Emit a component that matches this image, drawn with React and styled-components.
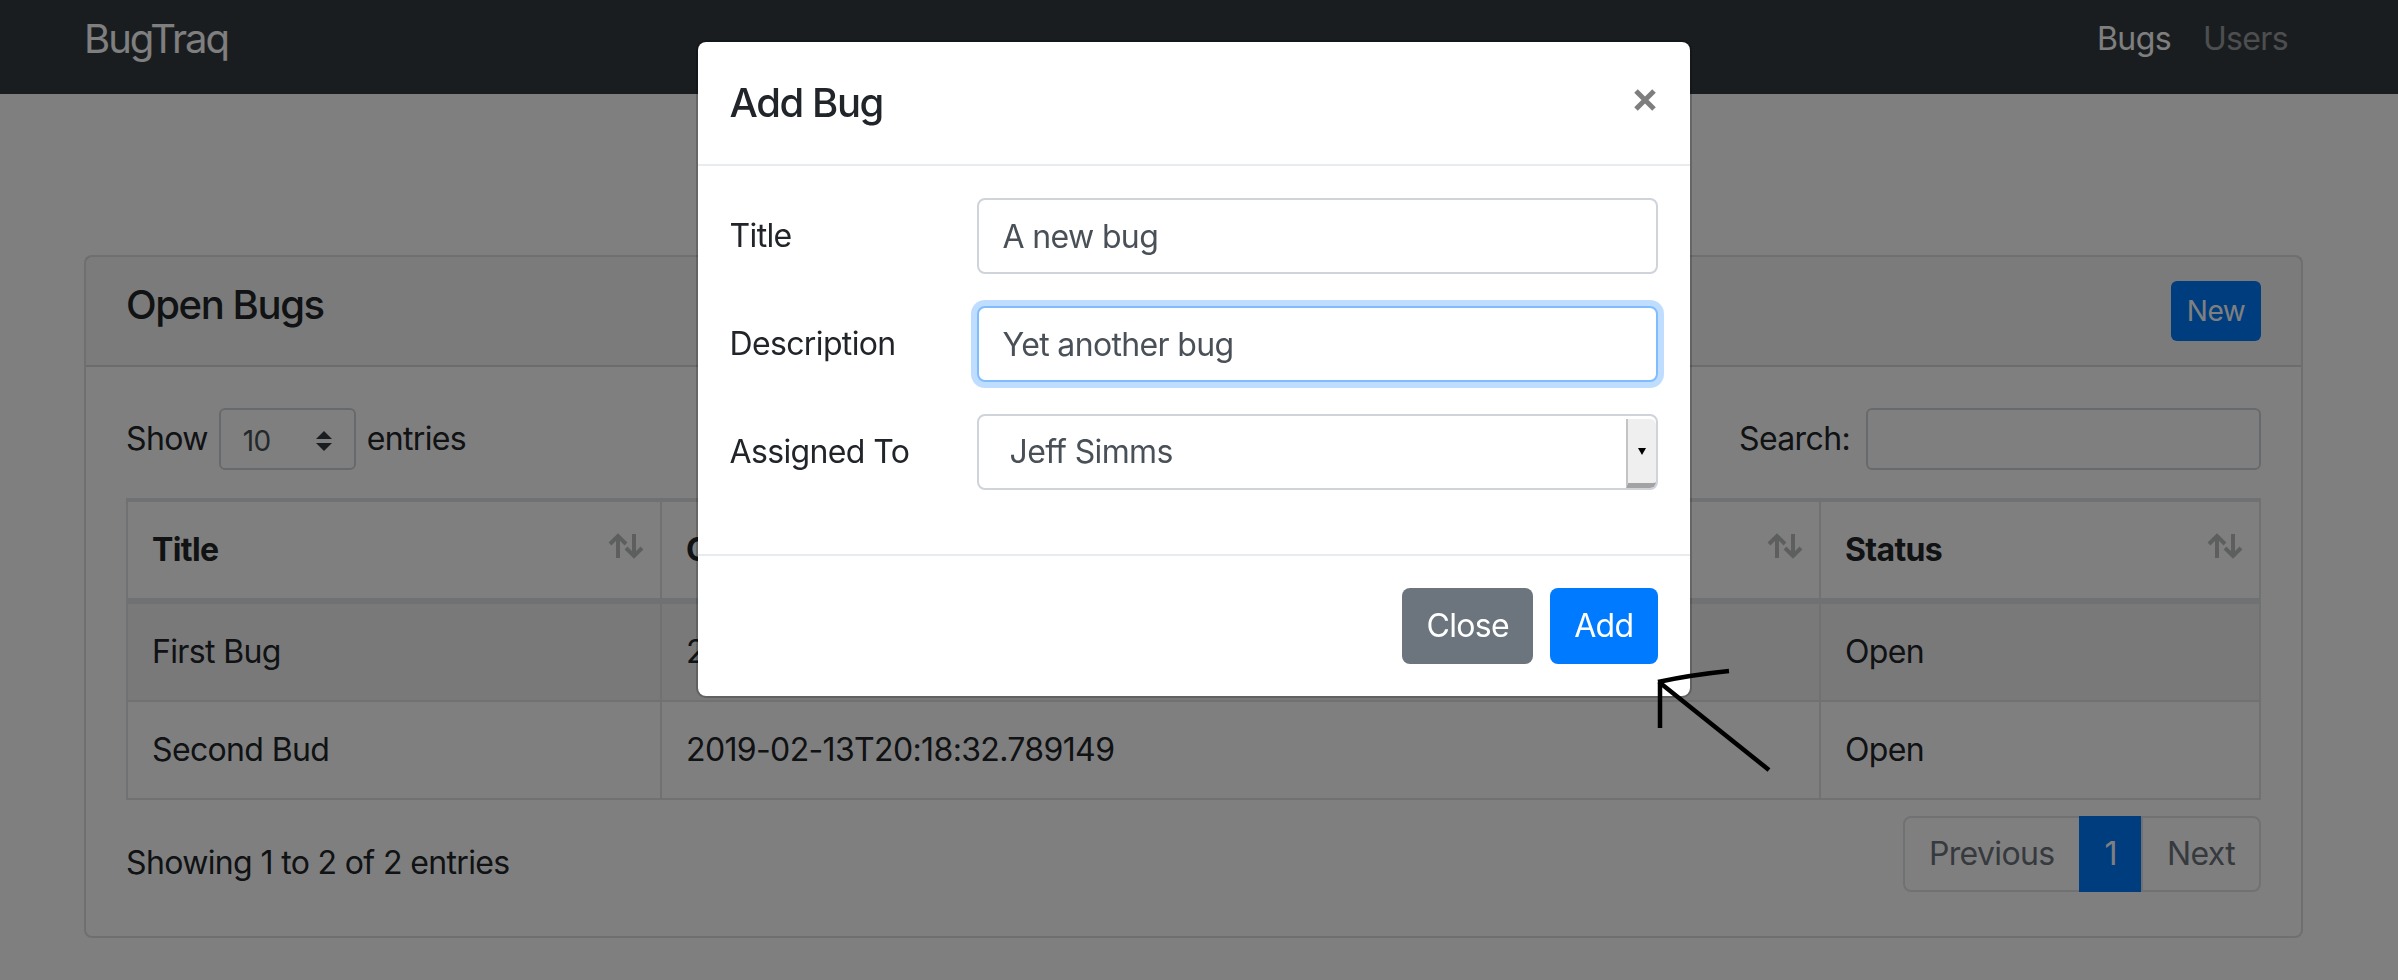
import React from "react";
import styled, { createGlobalStyle } from "styled-components";

const GlobalStyle = createGlobalStyle`
  * { box-sizing: border-box; }
  html, body { margin: 0; padding: 0; background: #fff; }
  body {
    font-family: Inter, "Liberation Sans", sans-serif;
    font-size: 32px;
    line-height: 1.5;
    letter-spacing: -0.02em;
    color: #212529;
    height: 980px;
    overflow: hidden;
  }
`;

const Navbar = styled.nav`
  height: 94px;
  background: #343a40;
  display: flex;
  justify-content: space-between;
  align-items: flex-start;
  padding: 0 94px 0 84px;
`;

const Brand = styled.a`
  font-size: 40px;
  line-height: 60px;
  letter-spacing: -0.05em;
  padding-top: 9px;
  color: #fff;
  text-decoration: none;
`;

const NavLinks = styled.div`
  display: flex;
  padding-top: 15px;
`;

const NavLink = styled.a`
  padding: 0 16px;
  font-size: 32px;
  line-height: 48px;
  color: ${(p) => (p.$active ? "#fff" : "rgba(255,255,255,.5)")};
  text-decoration: none;
`;

const Main = styled.main`
  padding: 161px 95px 0 84px;
`;

const Card = styled.section`
  border: 2px solid rgba(0, 0, 0, 0.125);
  border-radius: 8px;
  background: #fff;
`;

const CardHeader = styled.header`
  display: flex;
  justify-content: space-between;
  align-items: flex-start;
  padding: 24px 40px;
  background: rgba(0, 0, 0, 0.03);
  border-bottom: 2px solid rgba(0, 0, 0, 0.125);
`;

const CardTitle = styled.h5`
  margin: 0;
  font-size: 40px;
  font-weight: 500;
  line-height: 48px;
  letter-spacing: -0.035em;
`;

const SmallButton = styled.button`
  height: 60px;
  padding: 0 16px;
  font: inherit;
  font-size: 28px;
  letter-spacing: -0.02em;
  color: #fff;
  background: #007bff;
  border: 0;
  border-radius: 6px;
`;

const CardBody = styled.div`
  padding: 41px 40px 40px;
`;

const TopRow = styled.div`
  display: flex;
  justify-content: space-between;
  align-items: center;
  height: 62px;
`;

const InlineLabel = styled.label`
  display: flex;
  align-items: center;
  gap: ${(p) => p.$gap || 11}px;
`;

const LengthSelect = styled.div`
  width: 137px;
  height: 62px;
  display: flex;
  align-items: center;
  justify-content: space-between;
  padding: 4px 22px 0 22px;
  font-size: 28px;
  color: #495057;
  border: 2px solid #ced4da;
  border-radius: 6px;
`;

const SearchInput = styled.input`
  width: 395px;
  height: 62px;
  border: 2px solid #ced4da;
  border-radius: 6px;
  font: inherit;
  font-size: 28px;
  padding: 0 16px;
  outline: none;
`;

const Table = styled.table`
  width: 100%;
  table-layout: fixed;
  border-collapse: separate;
  border-spacing: 0;
  border: 2px solid #dee2e6;
  margin: 28px 0 12px;
`;

const Th = styled.th`
  width: ${(p) => p.$w}px;
  padding: 24px 16px 24px 24px;
  text-align: left;
  font-weight: 700;
  border-top: 2px solid #dee2e6;
  border-bottom: 4px solid #dee2e6;
  border-left: 2px solid #dee2e6;
  &:first-child { border-left: 0; }
`;

const HeadCell = styled.div`
  display: flex;
  justify-content: space-between;
  align-items: center;
`;

const SortIcon = styled.svg`
  width: 36px;
  height: 26px;
  margin-bottom: 8px;
  opacity: 0.3;
  flex-shrink: 0;
`;

const Tr = styled.tr`
  background: ${(p) => (p.$striped ? "rgba(0,0,0,.05)" : "transparent")};
`;

const Td = styled.td`
  padding: 24px;
  border-top: 2px solid #dee2e6;
  border-left: 2px solid #dee2e6;
  white-space: nowrap;
  overflow: hidden;
  &:first-child { border-left: 0; }
`;

const BottomRow = styled.div`
  display: flex;
  justify-content: space-between;
  align-items: flex-start;
`;

const Info = styled.div`
  padding-top: 27px;
  line-height: 48px;
`;

const Pagination = styled.ul`
  display: flex;
  list-style: none;
  margin: 4px 0;
  padding: 0;
`;

const PageLink = styled.li`
  padding: 16px 24px;
  line-height: 40px;
  border: 2px solid ${(p) => (p.$active ? "#007bff" : "#dee2e6")};
  background: ${(p) => (p.$active ? "#007bff" : "#fff")};
  color: ${(p) => (p.$active ? "#fff" : "#6c757d")};
  margin-left: -2px;
  &:first-child { margin-left: 0; border-radius: 8px 0 0 8px; }
  &:last-child { border-radius: 0 8px 8px 0; }
`;

const Backdrop = styled.div`
  position: fixed;
  inset: 0;
  background: rgba(0, 0, 0, 0.5);
  z-index: 1040;
`;

const ModalWrap = styled.div`
  position: fixed;
  inset: 0;
  z-index: 1050;
  display: flex;
  justify-content: center;
  align-items: flex-start;
  padding: 40px 11px 0 0;
`;

const ModalContent = styled.div`
  width: 996px;
  background: #fff;
  background-clip: padding-box;
  border: 2px solid rgba(0, 0, 0, 0.2);
  border-radius: 10px;
`;

const ModalHeader = styled.div`
  display: flex;
  justify-content: space-between;
  align-items: flex-start;
  padding: 31px 32px;
  border-bottom: 2px solid #e9ecef;
`;

const ModalTitle = styled.h5`
  margin: 0;
  font-size: 40px;
  font-weight: 500;
  line-height: 60px;
  letter-spacing: -0.035em;
`;

const CloseX = styled.button`
  margin-top: 15px;
  padding: 0;
  border: 0;
  background: transparent;
  opacity: 0.5;
  display: flex;
`;

const ModalBody = styled.div`
  padding: 32px;
`;

const FormRow = styled.div`
  display: grid;
  grid-template-columns: 247px 1fr;
  align-items: center;
  margin-bottom: 32px;
`;

const FieldInput = styled.input`
  width: 100%;
  height: 76px;
  padding: 0 24px;
  font: inherit;
  font-size: 32px;
  letter-spacing: -0.02em;
  color: #495057;
  border: 2px solid ${(p) => (p.$focused ? "#80bdff" : "#ced4da")};
  border-radius: 8px;
  outline: none;
  box-shadow: ${(p) => (p.$focused ? "0 0 0 6px rgba(0,123,255,.25)" : "none")};
`;

const SelectBox = styled.div`
  height: 76px;
  display: flex;
  border: 2px solid #ced4da;
  border-radius: 8px;
  color: #495057;
`;

const SelectValue = styled.span`
  flex: 1;
  display: flex;
  align-items: center;
  padding-left: 31px;
`;

const DropButton = styled.span`
  width: 30px;
  margin-top: 3px;
  background: #efefef;
  border-left: 2px solid #c4c4c4;
  border-bottom: 5px solid #a3a3a3;
  border-radius: 0 6px 6px 0;
  display: flex;
  align-items: center;
  justify-content: center;
`;

const ModalFooter = styled.div`
  display: flex;
  justify-content: flex-end;
  gap: 17px;
  padding: 32px;
  border-top: 2px solid #e9ecef;
`;

const Button = styled.button`
  height: 76px;
  padding: 0 24px;
  font: inherit;
  font-size: 32px;
  letter-spacing: -0.02em;
  color: #fff;
  background: ${(p) => (p.$variant === "secondary" ? "#6c757d" : "#007bff")};
  border: 0;
  border-radius: 8px;
`;

const Annotation = styled.svg`
  position: fixed;
  left: 1650px;
  top: 660px;
  z-index: 1060;
`;

const bugs = [
  { title: "First Bug", created: "2019-02-13T20:17:58.412335", status: "Open" },
  { title: "Second Bud", created: "2019-02-13T20:18:32.789149", status: "Open" },
];

function SortArrows() {
  return (
    <SortIcon viewBox="0 0 36 26" fill="none" stroke="#212529" strokeWidth="4">
      <path d="M10 25V3M2 11l8-8 8 8" />
      <path d="M26 1v22M18 15l8 8 8-8" />
    </SortIcon>
  );
}

export default function App() {
  const columns = [
    { name: "Title", w: 532 },
    { name: "Created", w: 1159 },
    { name: "Status", w: 440 },
  ];

  return (
    <>
      <GlobalStyle />
      <Navbar>
        <Brand href="#">BugTraq</Brand>
        <NavLinks>
          <NavLink $active href="#">Bugs</NavLink>
          <NavLink href="#">Users</NavLink>
        </NavLinks>
      </Navbar>

      <Main>
        <Card>
          <CardHeader>
            <CardTitle>Open Bugs</CardTitle>
            <SmallButton>New</SmallButton>
          </CardHeader>
          <CardBody>
            <TopRow>
              <InlineLabel>
                Show
                <LengthSelect>
                  10
                  <svg width="16" height="20" viewBox="0 0 4 5">
                    <path fill="#343a40" d="M2 0L0 2h4zm0 5L0 3h4z" />
                  </svg>
                </LengthSelect>
                entries
              </InlineLabel>
              <InlineLabel $gap={16}>
                Search:
                <SearchInput type="search" />
              </InlineLabel>
            </TopRow>

            <Table>
              <thead>
                <tr>
                  {columns.map((c) => (
                    <Th key={c.name} $w={c.w}>
                      <HeadCell>
                        {c.name}
                        <SortArrows />
                      </HeadCell>
                    </Th>
                  ))}
                </tr>
              </thead>
              <tbody>
                {bugs.map((b, i) => (
                  <Tr key={b.title} $striped={i % 2 === 0}>
                    <Td>{b.title}</Td>
                    <Td>{b.created}</Td>
                    <Td>{b.status}</Td>
                  </Tr>
                ))}
              </tbody>
            </Table>

            <BottomRow>
              <Info>Showing 1 to 2 of 2 entries</Info>
              <Pagination>
                <PageLink>Previous</PageLink>
                <PageLink $active>1</PageLink>
                <PageLink>Next</PageLink>
              </Pagination>
            </BottomRow>
          </CardBody>
        </Card>
      </Main>

      <Backdrop />
      <ModalWrap>
        <ModalContent>
          <ModalHeader>
            <ModalTitle>Add Bug</ModalTitle>
            <CloseX aria-label="Close">
              <svg width="26" height="24" viewBox="0 0 26 24">
                <path d="M4 3l18 18M22 3L4 21" stroke="#000" strokeWidth="5" />
              </svg>
            </CloseX>
          </ModalHeader>
          <ModalBody>
            <FormRow>
              <label>Title</label>
              <FieldInput defaultValue="A new bug" />
            </FormRow>
            <FormRow>
              <label>Description</label>
              <FieldInput $focused defaultValue="Yet another bug" />
            </FormRow>
            <FormRow>
              <label>Assigned To</label>
              <SelectBox>
                <SelectValue>Jeff Simms</SelectValue>
                <DropButton>
                  <svg width="8" height="7" viewBox="0 0 8 7">
                    <path d="M0 0h8L4 7z" fill="#000" />
                  </svg>
                </DropButton>
              </SelectBox>
            </FormRow>
          </ModalBody>
          <ModalFooter>
            <Button $variant="secondary">Close</Button>
            <Button>Add</Button>
          </ModalFooter>
        </ModalContent>
      </ModalWrap>

      <Annotation width="130" height="120" viewBox="0 0 130 120" fill="none" stroke="#000" strokeWidth="4.5">
        <path d="M9 22L119 110" />
        <path d="M8 22Q40 15 79 11" />
        <path d="M10 22V68" />
      </Annotation>
    </>
  );
}
